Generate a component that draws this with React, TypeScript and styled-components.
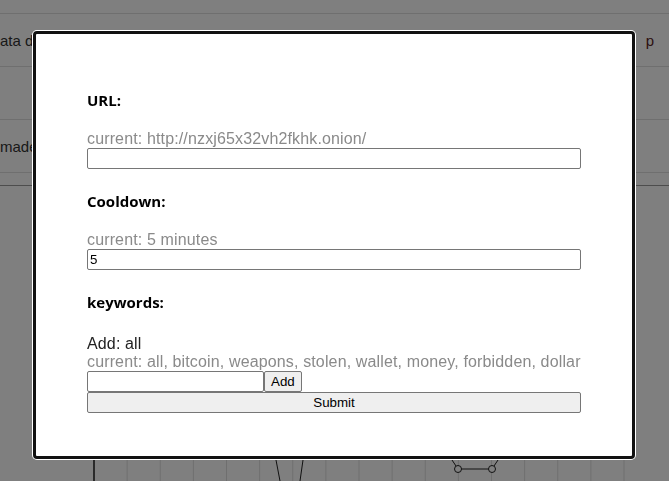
import React from 'react';
import styled, { createGlobalStyle } from 'styled-components';

const GlobalStyle = createGlobalStyle`
  html, body {
    margin: 0;
    padding: 0;
    background: #fff;
    font-family: "Liberation Sans", Arial, sans-serif;
    overflow: hidden;
  }
`;

// background page (behind the overlay)
const Page = styled.div`
  width: 669px;
  height: 481px;
  display: flex;
  flex-direction: column;
`;

const Row = styled.div<{ $h: number; $dark?: boolean }>`
  display: flex;
  justify-content: space-between;
  align-items: center;
  height: ${({ $h }) => $h}px;
  border-bottom: 1px solid ${({ $dark }) => ($dark ? '#9a9a9a' : '#dedede')};
  font-size: 15px;
  color: #333;
  flex-shrink: 0;
`;

const RowText = styled.span<{ $link?: boolean }>`
  padding-right: ${({ $link }) => ($link ? '15px' : '0')};
  color: ${({ $link }) => ($link ? '#5a2424' : '#333')};
`;

const Chart = styled.svg`
  display: block;
  flex: 1;
  width: 669px;
`;

const Overlay = styled.div`
  position: fixed;
  inset: 0;
  background: rgba(0, 0, 0, 0.5);
  display: flex;
  align-items: flex-start;
  justify-content: flex-start;
  padding: 31px 0 0 33px;
`;

const Modal = styled.div`
  box-sizing: border-box;
  width: 602px;
  height: 428px;
  background: #fff;
  border: 3px solid #111;
  border-radius: 4px;
  box-shadow: 0 0 0 1px #fff;
  padding: 56px 51px 0 51px;
  display: flex;
  flex-direction: column;
`;

const Label = styled.div<{ $gap: number }>`
  font-family: "Open Sans", "Noto Sans", sans-serif;
  font-weight: 700;
  font-size: 15px;
  line-height: 20px;
  color: #000;
  margin-bottom: ${({ $gap }) => $gap}px;
`;

const Note = styled.div<{ $muted?: boolean }>`
  font-size: 16px;
  line-height: 18px;
  letter-spacing: 0.14px;
  color: ${({ $muted }) => ($muted ? '#8a8a8a' : '#222')};
`;

const TextInput = styled.input<{ $w?: number }>`
  box-sizing: border-box;
  width: ${({ $w }) => ($w ? `${$w}px` : '100%')};
  height: 21px;
  margin: 0;
  padding: 1px 2px;
  border: 1px solid #767676;
  border-radius: 2px;
  font-family: "Liberation Sans", Arial, sans-serif;
  font-size: 13.33px;
  color: #000;
  background: #fff;
  outline: none;
`;

const Section = styled.div`
  display: flex;
  flex-direction: column;
  margin-bottom: 22px;
`;

const InlineRow = styled.div`
  display: flex;
  align-items: stretch;
`;

const Button = styled.button<{ $full?: boolean }>`
  box-sizing: border-box;
  height: 21px;
  width: ${({ $full }) => ($full ? '100%' : 'auto')};
  margin: 0;
  padding: 1px 6px;
  background: #efefef;
  border: 1px solid #767676;
  border-radius: 2px;
  font-family: "Liberation Sans", Arial, sans-serif;
  font-size: 13.33px;
  color: #000;
`;

const gridX = Array.from({ length: 17 }, (_, i) => 94 + i * 33.125);

const App: React.FC = () => {
  return (
    <>
      <GlobalStyle />
      <Page>
        <Row $h={13} />
        <Row $h={52}>
          <RowText>ata d</RowText>
          <RowText $link>p</RowText>
        </Row>
        <Row $h={52} />
        <Row $h={52}>
          <RowText>made</RowText>
        </Row>
        <Row $h={12} $dark />
        <Chart viewBox="0 0 669 295" preserveAspectRatio="xMinYMin">
          {gridX.map((x, i) => (
            <line
              key={x}
              x1={x}
              x2={x}
              y1={0}
              y2={295}
              stroke={i === 0 ? '#555' : '#dedede'}
              strokeWidth={i === 0 ? 2 : 1}
            />
          ))}
          <polyline points="262,200 276,274 280,295" fill="none" stroke="#222" strokeWidth={1} />
          <polyline points="312,200 303,274 300,295" fill="none" stroke="#222" strokeWidth={1} />
          <polyline points="440,250 452,274 458,283 492,283 498,274 510,250" fill="none" stroke="#222" strokeWidth={1} />
          <circle cx={458} cy={283} r={3.5} fill="#fff" stroke="#222" />
          <circle cx={492} cy={283} r={3.5} fill="#fff" stroke="#222" />
        </Chart>
      </Page>
      <Overlay>
        <Modal>
          <Section>
            <Label $gap={20}>URL:</Label>
            <Note $muted>current: http://nzxj65x32vh2fkhk.onion/</Note>
            <TextInput type="text" defaultValue="" />
          </Section>
          <Section>
            <Label $gap={20}>Cooldown:</Label>
            <Note $muted>current: 5 minutes</Note>
            <TextInput type="text" defaultValue="5" />
          </Section>
          <Label $gap={23}>keywords:</Label>
          <Note>Add: all</Note>
          <Note $muted>current: all, bitcoin, weapons, stolen, wallet, money, forbidden, dollar</Note>
          <InlineRow>
            <TextInput type="text" $w={177} defaultValue="" />
            <Button>Add</Button>
          </InlineRow>
          <Button $full>Submit</Button>
        </Modal>
      </Overlay>
    </>
  );
};

export default App;
